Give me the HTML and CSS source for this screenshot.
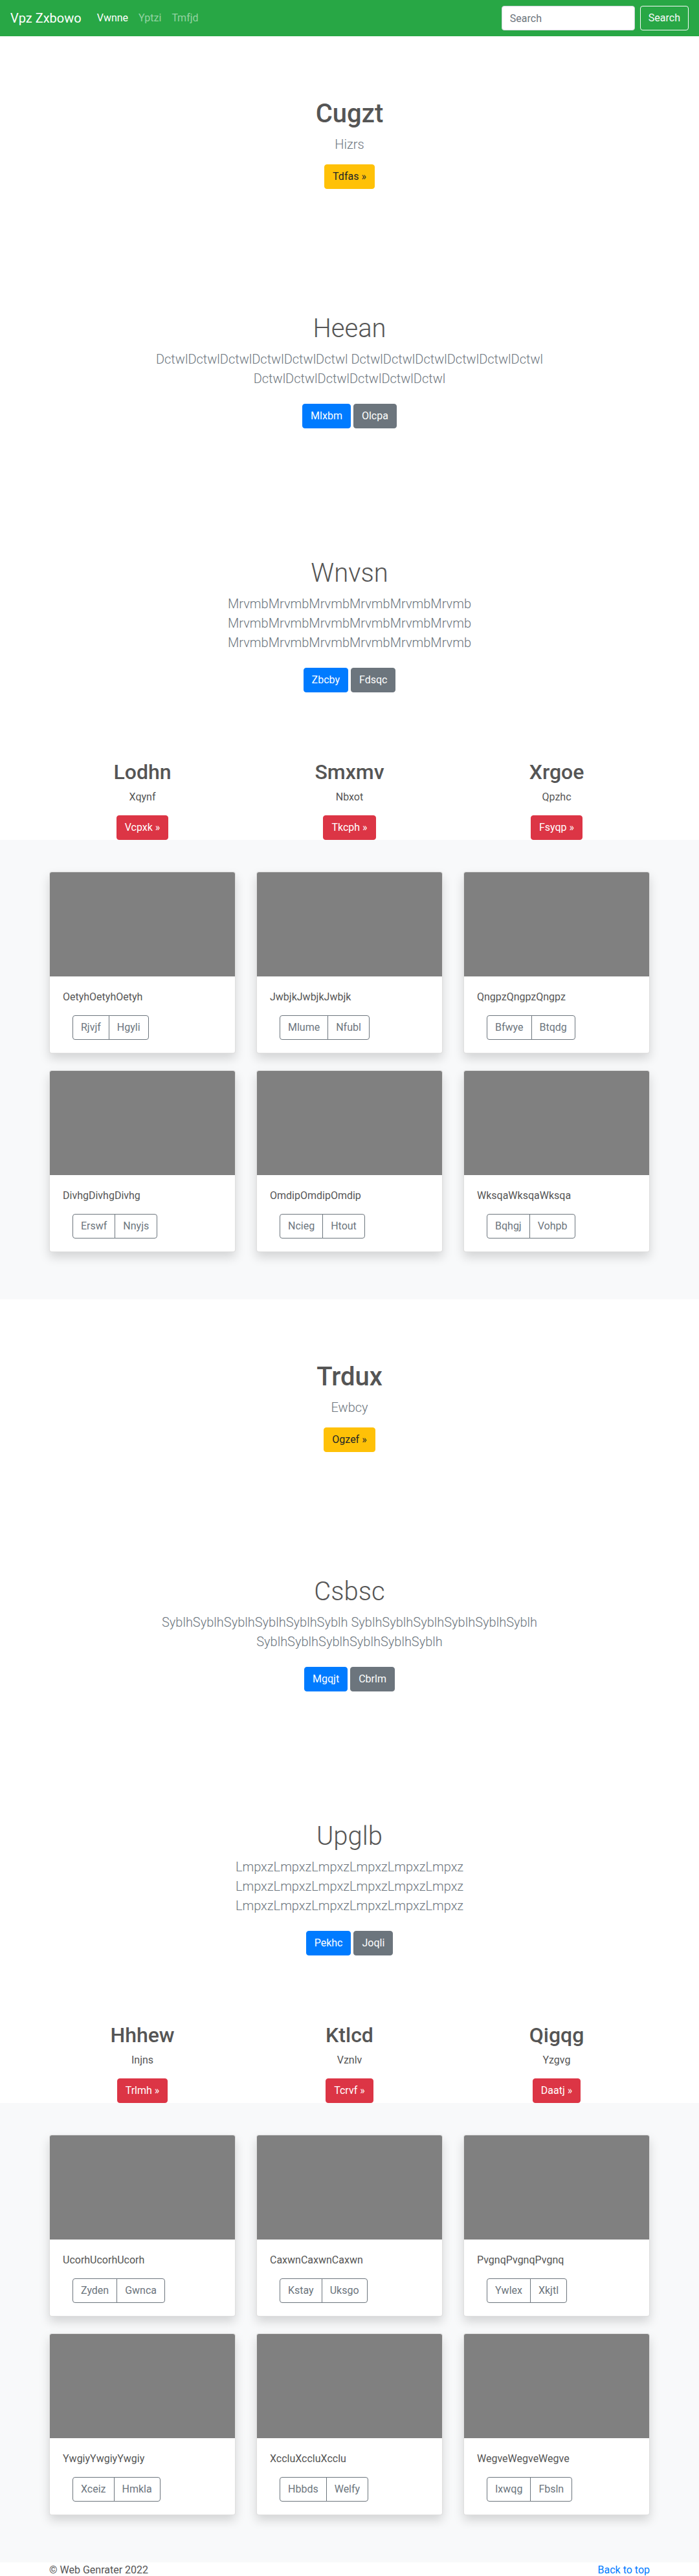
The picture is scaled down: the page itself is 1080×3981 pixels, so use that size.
FILE: index.html
```html
<!DOCTYPE html>
<html lang="en">
<head>
<meta charset="utf-8">
<title>Vpz Zxbowo</title>
<link rel="stylesheet" href="styles.css">
</head>
<body>
<nav class="navbar">
  <a class="brand" href="#">Vpz Zxbowo</a>
  <ul class="nav">
    <li><a class="nav-link active" href="#">Vwnne</a></li>
    <li><a class="nav-link" href="#">Yptzi</a></li>
    <li><a class="nav-link" href="#">Tmfjd</a></li>
  </ul>
  <form class="search">
    <input class="search-input" type="search" placeholder="Search">
    <button class="btn btn-outline-light" type="button">Search</button>
  </form>
</nav>

<main>
  <section class="hero">
    <div class="hero-inner">
      <h1 class="hero-title">Cugzt</h1>
      <p class="lead">Hizrs</p>
      <a class="btn btn-warning" href="#">Tdfas &raquo;</a>
    </div>
  </section>

  <section class="hero">
    <div class="hero-inner">
      <h1 class="hero-title light">Heean</h1>
      <p class="lead">DctwlDctwlDctwlDctwlDctwlDctwl DctwlDctwlDctwlDctwlDctwlDctwl DctwlDctwlDctwlDctwlDctwlDctwl</p>
      <p class="actions"><a class="btn btn-primary" href="#">Mlxbm</a><a class="btn btn-secondary" href="#">Olcpa</a></p>
    </div>
  </section>

  <section class="hero">
    <div class="hero-inner">
      <h1 class="hero-title light">Wnvsn</h1>
      <p class="lead">MrvmbMrvmbMrvmbMrvmbMrvmbMrvmb MrvmbMrvmbMrvmbMrvmbMrvmbMrvmb MrvmbMrvmbMrvmbMrvmbMrvmbMrvmb</p>
      <p class="actions"><a class="btn btn-primary" href="#">Zbcby</a><a class="btn btn-secondary" href="#">Fdsqc</a></p>
    </div>
  </section>

  <div class="features">
    <div class="feature">
      <h2 class="feature-title">Lodhn</h2>
      <p class="feature-text">Xqynf</p>
      <a class="btn btn-danger" href="#">Vcpxk &raquo;</a>
    </div>
    <div class="feature">
      <h2 class="feature-title">Smxmv</h2>
      <p class="feature-text">Nbxot</p>
      <a class="btn btn-danger" href="#">Tkcph &raquo;</a>
    </div>
    <div class="feature">
      <h2 class="feature-title">Xrgoe</h2>
      <p class="feature-text">Qpzhc</p>
      <a class="btn btn-danger" href="#">Fsyqp &raquo;</a>
    </div>
  </div>

  <div class="album">
    <div class="card-grid">
      <div class="card"><div class="card-img"></div><div class="card-body"><p class="card-text">OetyhOetyhOetyh</p><div class="btn-group"><a class="btn btn-outline-secondary" href="#">Rjvjf</a><a class="btn btn-outline-secondary" href="#">Hgyli</a></div></div></div>
      <div class="card"><div class="card-img"></div><div class="card-body"><p class="card-text">JwbjkJwbjkJwbjk</p><div class="btn-group"><a class="btn btn-outline-secondary" href="#">Mlume</a><a class="btn btn-outline-secondary" href="#">Nfubl</a></div></div></div>
      <div class="card"><div class="card-img"></div><div class="card-body"><p class="card-text">QngpzQngpzQngpz</p><div class="btn-group"><a class="btn btn-outline-secondary" href="#">Bfwye</a><a class="btn btn-outline-secondary" href="#">Btqdg</a></div></div></div>
      <div class="card"><div class="card-img"></div><div class="card-body"><p class="card-text">DivhgDivhgDivhg</p><div class="btn-group"><a class="btn btn-outline-secondary" href="#">Erswf</a><a class="btn btn-outline-secondary" href="#">Nnyjs</a></div></div></div>
      <div class="card"><div class="card-img"></div><div class="card-body"><p class="card-text">OmdipOmdipOmdip</p><div class="btn-group"><a class="btn btn-outline-secondary" href="#">Ncieg</a><a class="btn btn-outline-secondary" href="#">Htout</a></div></div></div>
      <div class="card"><div class="card-img"></div><div class="card-body"><p class="card-text">WksqaWksqaWksqa</p><div class="btn-group"><a class="btn btn-outline-secondary" href="#">Bqhgj</a><a class="btn btn-outline-secondary" href="#">Vohpb</a></div></div></div>
    </div>
  </div>

  <section class="hero">
    <div class="hero-inner">
      <h1 class="hero-title">Trdux</h1>
      <p class="lead">Ewbcy</p>
      <a class="btn btn-warning" href="#">Ogzef &raquo;</a>
    </div>
  </section>

  <section class="hero">
    <div class="hero-inner">
      <h1 class="hero-title light">Csbsc</h1>
      <p class="lead">SyblhSyblhSyblhSyblhSyblhSyblh SyblhSyblhSyblhSyblhSyblhSyblh SyblhSyblhSyblhSyblhSyblhSyblh</p>
      <p class="actions"><a class="btn btn-primary" href="#">Mgqjt</a><a class="btn btn-secondary" href="#">Cbrlm</a></p>
    </div>
  </section>

  <section class="hero">
    <div class="hero-inner">
      <h1 class="hero-title light">Upglb</h1>
      <p class="lead">LmpxzLmpxzLmpxzLmpxzLmpxzLmpxz LmpxzLmpxzLmpxzLmpxzLmpxzLmpxz LmpxzLmpxzLmpxzLmpxzLmpxzLmpxz</p>
      <p class="actions"><a class="btn btn-primary" href="#">Pekhc</a><a class="btn btn-secondary" href="#">Joqli</a></p>
    </div>
  </section>

  <div class="features">
    <div class="feature">
      <h2 class="feature-title">Hhhew</h2>
      <p class="feature-text">Injns</p>
      <a class="btn btn-danger" href="#">Trlmh &raquo;</a>
    </div>
    <div class="feature">
      <h2 class="feature-title">Ktlcd</h2>
      <p class="feature-text">Vznlv</p>
      <a class="btn btn-danger" href="#">Tcrvf &raquo;</a>
    </div>
    <div class="feature">
      <h2 class="feature-title">Qigqg</h2>
      <p class="feature-text">Yzgvg</p>
      <a class="btn btn-danger" href="#">Daatj &raquo;</a>
    </div>
  </div>

  <div class="album">
    <div class="card-grid">
      <div class="card"><div class="card-img"></div><div class="card-body"><p class="card-text">UcorhUcorhUcorh</p><div class="btn-group"><a class="btn btn-outline-secondary" href="#">Zyden</a><a class="btn btn-outline-secondary" href="#">Gwnca</a></div></div></div>
      <div class="card"><div class="card-img"></div><div class="card-body"><p class="card-text">CaxwnCaxwnCaxwn</p><div class="btn-group"><a class="btn btn-outline-secondary" href="#">Kstay</a><a class="btn btn-outline-secondary" href="#">Uksgo</a></div></div></div>
      <div class="card"><div class="card-img"></div><div class="card-body"><p class="card-text">PvgnqPvgnqPvgnq</p><div class="btn-group"><a class="btn btn-outline-secondary" href="#">Ywlex</a><a class="btn btn-outline-secondary" href="#">Xkjtl</a></div></div></div>
      <div class="card"><div class="card-img"></div><div class="card-body"><p class="card-text">YwgiyYwgiyYwgiy</p><div class="btn-group"><a class="btn btn-outline-secondary" href="#">Xceiz</a><a class="btn btn-outline-secondary" href="#">Hmkla</a></div></div></div>
      <div class="card"><div class="card-img"></div><div class="card-body"><p class="card-text">XccluXccluXcclu</p><div class="btn-group"><a class="btn btn-outline-secondary" href="#">Hbbds</a><a class="btn btn-outline-secondary" href="#">Welfy</a></div></div></div>
      <div class="card"><div class="card-img"></div><div class="card-body"><p class="card-text">WegveWegveWegve</p><div class="btn-group"><a class="btn btn-outline-secondary" href="#">Ixwqg</a><a class="btn btn-outline-secondary" href="#">Fbsln</a></div></div></div>
    </div>
  </div>
</main>

<footer class="footer">
  <p class="copyright">&copy; Web Genrater 2022</p>
  <a class="back-link" href="#">Back to top</a>
</footer>
</body>
</html>
```

FILE: styles.css
```css
* {
  box-sizing: border-box;
}

html,
body {
  margin: 0;
  padding: 0;
}

body {
  font-family: Roboto, "Liberation Sans", Arial, sans-serif;
  font-size: 16px;
  line-height: 1.5;
  color: #555;
  background: #fff;
}

a {
  text-decoration: none;
}

/* Navbar */
.navbar {
  display: flex;
  align-items: center;
  height: 56px;
  padding: 8px 16px;
  background: #28a745;
}

.brand {
  font-size: 20px;
  line-height: 30px;
  padding: 5px 0;
  margin-right: 16px;
  color: #fff;
}

.nav {
  display: flex;
  flex: 1;
  list-style: none;
  margin: 0;
  padding: 0;
}

.nav-link {
  display: block;
  padding: 8px;
  color: rgba(255, 255, 255, 0.5);
}

.nav-link.active {
  color: #fff;
}

.search {
  display: flex;
  align-items: center;
  margin: 0;
}

.search-input {
  width: 206px;
  height: 38px;
  margin: 0 8px 0 0;
  padding: 6px 12px;
  font-family: inherit;
  font-size: 16px;
  line-height: 24px;
  color: #495057;
  background: #fff;
  border: 1px solid #ced4da;
  border-radius: 4px;
}

.search-input::placeholder {
  color: #6c757d;
}

/* Buttons */
.btn {
  display: inline-block;
  padding: 6px 12px;
  font-family: inherit;
  font-size: 16px;
  font-weight: 400;
  line-height: 24px;
  text-align: center;
  white-space: nowrap;
  border: 1px solid transparent;
  border-radius: 4px;
  cursor: pointer;
}

.btn-outline-light {
  color: #f8f9fa;
  background: transparent;
  border-color: #f8f9fa;
}

.btn-warning {
  color: #212529;
  background: #ffc107;
  border-color: #ffc107;
}

.btn-primary {
  color: #fff;
  background: #007bff;
  border-color: #007bff;
}

.btn-secondary {
  color: #fff;
  background: #6c757d;
  border-color: #6c757d;
}

.btn-danger {
  color: #fff;
  background: #dc3545;
  border-color: #dc3545;
}

.btn-outline-secondary {
  color: #6c757d;
  background: transparent;
  border-color: #6c757d;
}

/* Hero sections */
.hero {
  padding: 96px 0;
  text-align: center;
}

.hero-inner {
  max-width: 640px;
  margin: 0 auto;
  padding: 0 15px;
}

.hero-title {
  margin: 0 0 8px;
  font-size: 40px;
  line-height: 48px;
  font-weight: 500;
}

.hero-title.light {
  font-weight: 300;
}

.lead {
  margin: 0 0 16px;
  font-size: 20px;
  line-height: 30px;
  font-weight: 300;
  color: #6c757d;
}

.actions {
  display: flex;
  justify-content: center;
  gap: 4px;
  margin: 0;
  padding: 8px 0;
}

/* Feature columns */
.features {
  display: grid;
  grid-template-columns: repeat(3, 288px);
  column-gap: 32px;
  justify-content: center;
  text-align: center;
}

.feature-title {
  margin: 0 0 8px;
  font-size: 32px;
  line-height: 38px;
  font-weight: 500;
}

.feature-text {
  margin: 0 0 16px;
}

/* Album */
.album {
  padding: 49px 0 73px;
  background: #f8f9fa;
}

.card-grid {
  display: grid;
  grid-template-columns: repeat(3, 288px);
  gap: 26px 32px;
  justify-content: center;
}

.card {
  overflow: hidden;
  background: #fff;
  border: 1px solid rgba(0, 0, 0, 0.125);
  border-radius: 4px;
  box-shadow: 0 8px 16px rgba(0, 0, 0, 0.15);
}

.card-img {
  aspect-ratio: 16 / 9;
  background: #808080;
}

.card-body {
  padding: 20px;
}

.card-text {
  margin: 0 0 16px;
}

.btn-group {
  display: inline-flex;
  margin-left: 15px;
}

.btn-group .btn:first-child {
  border-top-right-radius: 0;
  border-bottom-right-radius: 0;
}

.btn-group .btn + .btn {
  margin-left: -1px;
  border-top-left-radius: 0;
  border-bottom-left-radius: 0;
}

/* Footer */
.footer {
  display: flex;
  justify-content: space-between;
  width: 928px;
  margin: 0 auto;
  line-height: 24px;
}

.copyright {
  margin: 0;
}

.back-link {
  color: #007bff;
}
```
